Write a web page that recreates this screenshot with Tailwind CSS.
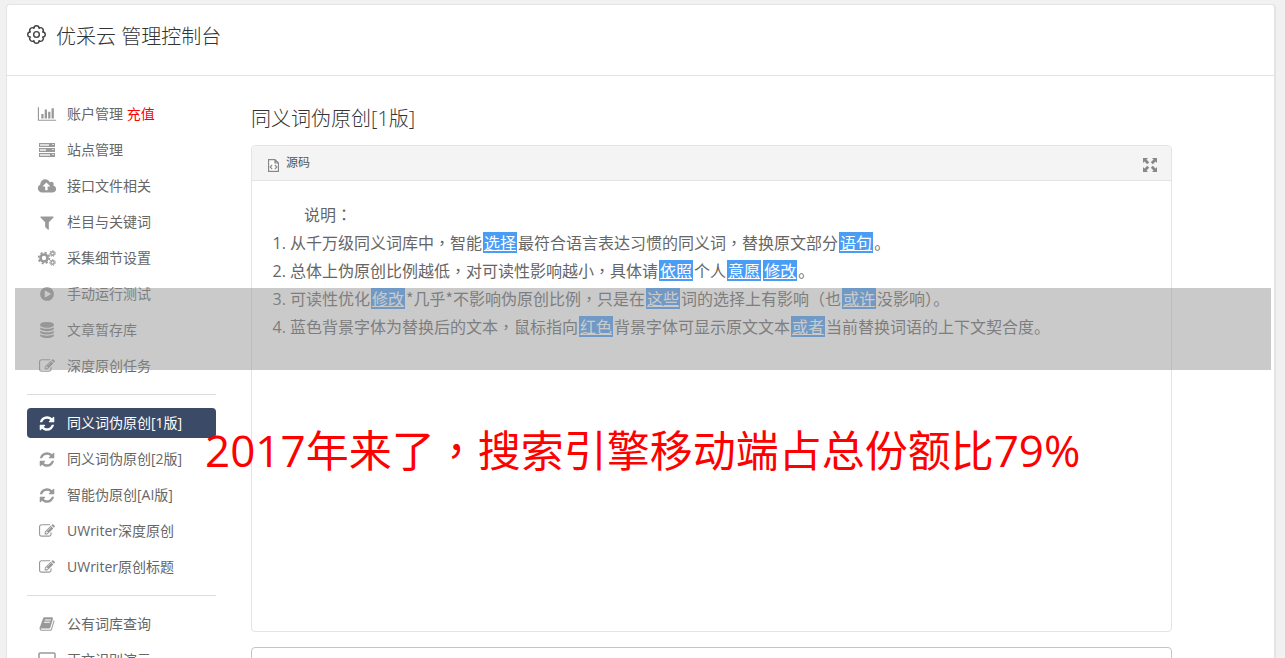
<!DOCTYPE html>
<html lang="zh-CN">
<head>
    <meta charset="UTF-8">
    <meta name="viewport" content="width=device-width, initial-scale=1.0">
    <title>优采云 管理控制台</title>
    <script src="https://cdn.jsdelivr.net/npm/@tailwindcss/browser@4"></script>
</head>
<body class="bg-[#f1f1f1] font-['Open_Sans','Noto_Sans_CJK_SC',sans-serif] text-[#666]">

    <!-- Icon shapes used more than once -->
    <svg class="hidden">
        <symbol id="refresh" viewBox="0 0 1792 1792"><path d="M1639 1056q0 5-1 7-64 268-268 434.5t-478 166.5q-146 0-282.5-55t-243.5-157l-129 129q-19 19-45 19t-45-19-19-45v-448q0-26 19-45t45-19h448q26 0 45 19t19 45-19 45l-137 137q71 66 161 102t187 36q134 0 250-65t186-179q11-17 53-117 8-23 30-23h192q13 0 22.5 9.5t9.5 22.5zm25-800v448q0 26-19 45t-45 19h-448q-26 0-45-19t-19-45 19-45l138-138q-148-137-349-137-134 0-250 65t-186 179q-11 17-53 117-8 23-30 23h-199q-13 0-22.5-9.5t-9.5-22.5v-7q65-268 270-434.5t480-166.5q146 0 284 55.5t245 156.5l130-129q19-19 45-19t45 19 19 45z"/></symbol>
        <symbol id="edit" viewBox="0 0 1792 1792"><path d="M888 1184l116-116-152-152-116 116v56h96v96h56zm440-720q-16-16-33 1l-350 350q-17 17-1 33t33-1l350-350q17-17 1-33zm80 594v190q0 119-84.5 203.5t-203.5 84.5h-832q-119 0-203.5-84.5t-84.5-203.5v-832q0-119 84.5-203.5t203.5-84.5h832q63 0 117 25 15 7 18 23 3 17-9 29l-49 49q-14 14-32 8-23-6-45-6h-832q-66 0-113 47t-47 113v832q0 66 47 113t113 47h832q66 0 113-47t47-113v-126q0-13 9-22l64-64q15-15 35-7t20 29zm-96-738l288 288-672 672h-288v-288zm444 132l-92 92-288-288 92-92q28-28 68-28t68 28l152 152q28 28 28 68t-28 68z"/></symbol>
    </svg>

    <div class="relative pt-1 pl-[6px] pr-[9px]">
        <div class="bg-white border border-r-2 border-[#e4e4e4] rounded-t">

            <!-- Header -->
            <header class="flex items-start gap-[10px] h-[71px] pl-5 pt-4 border-b border-[#e4e4e4] text-[#333]">
                <svg class="size-[19px] mt-1 fill-none stroke-[#444] stroke-[1.5]" viewBox="0 0 20 20"><path stroke-linejoin="round" d="M16.5 7.300A2.700 2.700 0 0 1 16.500 12.700A2.700 2.700 0 0 1 12.700 16.500A2.700 2.700 0 0 1 7.300 16.500A2.700 2.700 0 0 1 3.500 12.700A2.700 2.700 0 0 1 3.500 7.300A2.700 2.700 0 0 1 7.300 3.500A2.700 2.700 0 0 1 12.700 3.500A2.700 2.700 0 0 1 16.500 7.300Z"/><circle cx="10" cy="10" r="3"/></svg>
                <h1 class="text-xl leading-8 font-light">优采云 管理控制台</h1>
            </header>

            <div class="flex gap-[35px] pl-5 pr-[102px]">

                <!-- Sidebar -->
                <nav class="w-[189px] shrink-0 pt-[23px] text-sm">
                    <div class="flex flex-col gap-[6px]">
                        <a href="#" class="flex items-center gap-[10px] h-[30px] pl-[10px]">
                            <svg class="w-5 h-4 fill-[#999]" viewBox="0 0 2048 1792"><path d="M640 896v512h-256v-512h256zm384-512v1024h-256v-1024h256zm1024 1152v128h-2048v-1536h128v1408h1920zm-640-896v768h-256v-768h256zm384-384v1152h-256v-1152h256z"/></svg>
                            <span>账户管理 <span class="text-[red]">充值</span></span>
                        </a>
                        <a href="#" class="flex items-center gap-[10px] h-[30px] pl-[10px]">
                            <svg class="w-5 h-[18px] fill-[#999]" viewBox="0 0 20 18"><path d="M2 2h16v4H2zM2 7h16v4H2zM2 12h16v4H2z"/><path class="fill-[#ddd]" d="M3 3h9v2H3zM15 3h2v1h-2zM3 8h6v2H3zM15 8h2v1h-2zM3 13h10v2H3zM15 13h2v1h-2z"/></svg>
                            <span>站点管理</span>
                        </a>
                        <a href="#" class="flex items-center gap-[10px] h-[30px] pl-[10px]">
                            <svg class="w-5 h-[17px] fill-[#999]" viewBox="-64 0 1920 1792"><path d="M1216 864q0-14-9-23l-352-352q-9-9-23-9t-23 9l-351 351q-10 12-10 24 0 14 9 23t23 9h224v352q0 13 9.500 22.500t22.500 9.500h192q13 0 22.500-9.500t9.500-22.500v-352h224q13 0 22.500-9.500t9.500-22.500zm640 288q0 159-112.500 271.500t-271.500 112.500h-1088q-185 0-316.500-131.500t-131.500-316.500q0-130 70-240t188-165q-2-30-2-43 0-212 150-362t362-150q156 0 285.500 87t188.500 231q71-62 166-62 106 0 181 75t75 181q0 76-41 138 130 31 213.500 135.500t83.500 238.500z"/></svg>
                            <span>接口文件相关</span>
                        </a>
                        <a href="#" class="flex items-center gap-[10px] h-[30px] pl-[10px]">
                            <svg class="w-5 h-[17px] fill-[#999]" viewBox="0 0 1792 1792"><path d="M1595 295q17 41-14 70l-493 493v742q0 42-39 59-13 5-25 5-27 0-45-19l-256-256q-19-19-19-45v-486l-493-493q-31-29-14-70 17-39 59-39h1280q42 0 59 39z"/></svg>
                            <span>栏目与关键词</span>
                        </a>
                        <a href="#" class="flex items-center gap-[10px] h-[30px] pl-[10px]">
                            <svg class="w-5 h-[18px] fill-none stroke-[#999]" viewBox="0 0 20 18"><circle cx="7" cy="9" r="3.500" stroke-width="2.600"/><circle cx="7" cy="9" r="5.400" stroke-width="1.700" stroke-dasharray="2.120 2.120"/><circle cx="15.500" cy="4.500" r="1.700" stroke-width="1.400"/><circle cx="15.500" cy="4.500" r="2.900" stroke-width="1" stroke-dasharray="1.300 1.300"/><circle cx="15.500" cy="13.500" r="1.700" stroke-width="1.400"/><circle cx="15.500" cy="13.500" r="2.900" stroke-width="1" stroke-dasharray="1.300 1.300"/></svg>
                            <span>采集细节设置</span>
                        </a>
                        <a href="#" class="flex items-center gap-[10px] h-[30px] pl-[10px]">
                            <svg class="w-5 h-4 fill-[#999]" viewBox="0 0 1792 1792"><path d="M896 128q209 0 385.500 103t279.500 279.500 103 385.500-103 385.500-279.500 279.500-385.500 103-385.500-103-279.500-279.500-103-385.500 103-385.500 279.500-279.500 385.500-103zm384 823q32-18 32-55t-32-55l-544-320q-31-19-64-1-32 19-32 56v640q0 37 32 56 16 8 32 8 17 0 32-9z"/></svg>
                            <span>手动运行测试</span>
                        </a>
                        <a href="#" class="flex items-center gap-[10px] h-[30px] pl-[10px]">
                            <svg class="w-5 h-4 fill-[#999]" viewBox="0 0 1792 1792"><path d="M896 768q237 0 443-43t325-127v170q0 69-103 128t-280 93.500-385 34.500-385-34.500-280-93.500-103-128v-170q119 84 325 127t443 43zm0 768q237 0 443-43t325-127v170q0 69-103 128t-280 93.500-385 34.500-385-34.500-280-93.500-103-128v-170q119 84 325 127t443 43zm0-384q237 0 443-43t325-127v170q0 69-103 128t-280 93.500-385 34.500-385-34.500-280-93.500-103-128v-170q119 84 325 127t443 43zm0-1152q208 0 385 34.500t280 93.500 103 128v128q0 69-103 128t-280 93.500-385 34.500-385-34.500-280-93.500-103-128v-128q0-69 103-128t280-93.500 385-34.500z"/></svg>
                            <span>文章暂存库</span>
                        </a>
                        <a href="#" class="flex items-center gap-[10px] h-[30px] pl-[10px]">
                            <svg class="w-5 h-4 fill-[#999]"><use href="#edit"/></svg>
                            <span>深度原创任务</span>
                        </a>
                    </div>

                    <hr class="my-[13px] border-[#ddd]">

                    <div class="flex flex-col gap-[6px]">
                        <a href="#" class="flex items-center gap-[10px] h-[30px] pl-[10px] rounded bg-[#3b4a66] text-white">
                            <svg class="w-5 h-[17px] fill-white"><use href="#refresh"/></svg>
                            <span>同义词伪原创[1版]</span>
                        </a>
                        <a href="#" class="flex items-center gap-[10px] h-[30px] pl-[10px]">
                            <svg class="w-5 h-[17px] fill-[#999]"><use href="#refresh"/></svg>
                            <span>同义词伪原创[2版]</span>
                        </a>
                        <a href="#" class="flex items-center gap-[10px] h-[30px] pl-[10px]">
                            <svg class="w-5 h-[17px] fill-[#999]"><use href="#refresh"/></svg>
                            <span>智能伪原创[AI版]</span>
                        </a>
                        <a href="#" class="flex items-center gap-[10px] h-[30px] pl-[10px]">
                            <svg class="w-5 h-4 fill-[#999]"><use href="#edit"/></svg>
                            <span>UWriter深度原创</span>
                        </a>
                        <a href="#" class="flex items-center gap-[10px] h-[30px] pl-[10px]">
                            <svg class="w-5 h-4 fill-[#999]"><use href="#edit"/></svg>
                            <span>UWriter原创标题</span>
                        </a>
                    </div>

                    <hr class="my-[13px] border-[#ddd]">

                    <div class="flex flex-col gap-[6px]">
                        <a href="#" class="flex items-center gap-[10px] h-[30px] pl-[10px]">
                            <svg class="w-5 h-4 fill-[#999]" viewBox="0 0 1792 1792"><path d="M1703 478q40 57 18 129l-275 906q-19 64-76.500 107.500t-122.500 43.500h-923q-77 0-148.500-53.500t-99.500-131.500q-24-67-2-127 0-4 3-27t4-37q1-8-3-21.500t-3-19.500q2-11 8-21t16.500-23.500 16.500-23.500q23-38 45-91.500t30-91.500q3-10 .5-30t-.5-28q3-11 17-28t17-23q21-36 42-92t25-90q1-9-2.500-32t.5-28q4-13 22-30.500t22-22.500q19-26 42.500-84.500t27.500-96.500q1-8-3-25.500t-2-26.500q2-8 9-18t18-23 17-21q8-12 16.500-30.500t15-35 16-36 19.500-32 26.500-23.500 36-11.500 47.500 5.500l-1 3q38-9 51-9h761q74 0 114 56t18 130l-274 906q-36 119-71.500 153.500t-128.500 34.500h-869q-27 0-38 15-11 16-1 43 24 70 144 70h923q29 0 56-15.500t35-41.500l300-987q7-22 5-57 38 15 59 43zm-1064 2q-4 13 2 22.500t20 9.500h608q13 0 25.500-9.500t16.500-22.500l21-64q4-13-2-22.500t-20-9.500h-608q-13 0-25.500 9.500t-16.500 22.500zm-83 256q-4 13 2 22.500t20 9.500h608q13 0 25.500-9.500t16.500-22.500l21-64q4-13-2-22.500t-20-9.500h-608q-13 0-25.500 9.500t-16.500 22.500z"/></svg>
                            <span>公有词库查询</span>
                        </a>
                        <a href="#" class="flex items-center gap-[10px] h-[30px] pl-[10px]">
                            <svg class="w-5 h-4 fill-none stroke-[#999] stroke-[1.5]" viewBox="0 0 20 16"><rect x="2" y="1" width="16" height="11" rx="1"/><path d="M6 15h8"/></svg>
                            <span>正文识别演示</span>
                        </a>
                    </div>
                </nav>

                <!-- Editor -->
                <main class="flex-1 pt-[27px]">
                    <h2 class="mb-[10px] text-xl leading-8 font-light text-[#333]">同义词伪原创[1版]</h2>

                    <div class="border border-[#e4e4e4] rounded">
                        <div class="flex items-center justify-between h-[35px] pl-[15px] pr-[13px] bg-[#f4f4f4] border-b border-[#e4e4e4] rounded-t">
                            <button type="button" class="flex items-center gap-[6px] text-xs text-[#555]">
                                <svg class="w-[13px] h-[15px] mt-1 fill-white stroke-[#888] stroke-[1.2]" viewBox="0 0 13 15"><path d="M1.600 1.600h6.400l3.400 3.400v8.400h-9.800zM8 1.600V5h3.400"/><path class="fill-none" d="M5.200 6.800L3.200 9l2 2.200M7.800 6.800L9.800 9l-2 2.200"/></svg>
                                源码
                            </button>
                            <button type="button" aria-label="全屏" class="mt-1">
                                <svg class="size-4 fill-[#888]" viewBox="0 0 16 16"><path d="M1 1h5L4.500 2.500 7.200 5.200 5.200 7.200 2.500 4.500 1 6zM15 1v5l-1.500-1.500-2.700 2.700-2-2 2.700-2.700L10 1zM1 15v-5l1.500 1.500 2.700-2.700 2 2-2.700 2.700L6 15zM15 15h-5l1.500-1.500-2.700-2.700 2-2 2.700 2.700L15 10z"/></svg>
                            </button>
                        </div>
                        <div class="min-h-[450px] pt-[19px] px-5 font-['Noto_Sans_CJK_SC',sans-serif] text-base leading-7">
                            <p class="pl-8">说明<span lang="zh-TW" class="font-['Noto_Sans_CJK_TC']">：</span></p>
                            <ol class="list-decimal pl-[18px] marker:font-['Open_Sans']">
                                <li>从千万级同义词库中<span lang="zh-TW" class="font-['Noto_Sans_CJK_TC']">，</span>智能<u class="inline-block mx-px px-px h-[21px] leading-[21px] bg-[#4a9df5] text-white">选择</u>最符合语言表达习惯的同义词<span lang="zh-TW" class="font-['Noto_Sans_CJK_TC']">，</span>替换原文部分<u class="inline-block mx-px px-px h-[21px] leading-[21px] bg-[#4a9df5] text-white">语句</u>。</li>
                                <li>总体上伪原创比例越低<span lang="zh-TW" class="font-['Noto_Sans_CJK_TC']">，</span>对可读性影响越小<span lang="zh-TW" class="font-['Noto_Sans_CJK_TC']">，</span>具体请<u class="inline-block mx-px px-px h-[21px] leading-[21px] bg-[#4a9df5] text-white">依照</u>个人<u class="inline-block mx-px px-px h-[21px] leading-[21px] bg-[#4a9df5] text-white">意愿</u><u class="inline-block mx-px px-px h-[21px] leading-[21px] bg-[#4a9df5] text-white">修改</u>。</li>
                                <li>可读性优化<u class="inline-block mx-px px-px h-[21px] leading-[21px] bg-[#4a9df5] text-white">修改</u>*几乎*不影响伪原创比例<span lang="zh-TW" class="font-['Noto_Sans_CJK_TC']">，</span>只是在<u class="inline-block mx-px px-px h-[21px] leading-[21px] bg-[#4a9df5] text-white">这些</u>词的选择上有影响<span lang="zh-TW" class="font-['Noto_Sans_CJK_TC']">（</span>也<u class="inline-block mx-px px-px h-[21px] leading-[21px] bg-[#4a9df5] text-white">或许</u>没影响<span lang="zh-TW" class="font-['Noto_Sans_CJK_TC']">）</span>。</li>
                                <li>蓝色背景字体为替换后的文本<span lang="zh-TW" class="font-['Noto_Sans_CJK_TC']">，</span>鼠标指向<u class="inline-block mx-px px-px h-[21px] leading-[21px] bg-[#4a9df5] text-white">红色</u>背景字体可显示原文文本<u class="inline-block mx-px px-px h-[21px] leading-[21px] bg-[#4a9df5] text-white">或者</u>当前替换词语的上下文契合度。</li>
                            </ol>
                        </div>
                    </div>

                    <textarea aria-label="原文" class="block w-full h-24 mt-[15px] border border-[#c4c4c4] rounded resize-none"></textarea>
                </main>
            </div>
        </div>

        <!-- Overlay strip and banner text -->
        <div class="absolute left-[15px] right-[14px] top-[288px] h-[82px] bg-[#959595]/50"></div>
        <p class="absolute left-[205px] top-[418px] text-[43px] leading-[60px] whitespace-nowrap text-[red]"><span class="text-[44px]">2017</span>年来了<span lang="zh-TW" class="font-['Noto_Sans_CJK_TC']">，</span>搜索引擎移动端占总份额比<span class="text-[44px]">79%</span></p>
    </div>

</body>
</html>
